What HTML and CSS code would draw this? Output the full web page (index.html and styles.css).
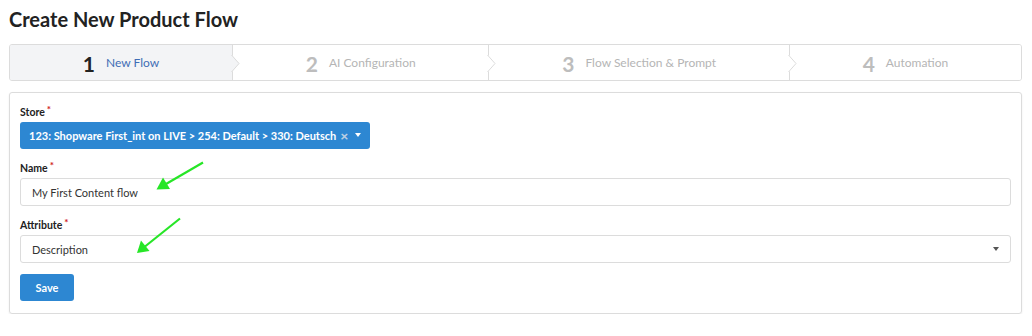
FILE: index.html
```html
<!DOCTYPE html>
<html lang="en">

<head>
    <meta charset="UTF-8">
    <meta name="viewport" content="width=device-width, initial-scale=1.0">
    <title>Create New Product Flow</title>
    <link rel="stylesheet" href="styles.css">
</head>

<body>
    <h1 class="page-title">Create New Product Flow</h1>

    <!-- wizard steps -->
    <div class="steps">
        <div class="step active">
            <span class="num">1</span><span class="text">New Flow</span>
            <svg class="chevron" width="10" height="17" viewBox="0 0 10 17">
                <polygon points="0,0 1,0 8.5,8.5 1,17 0,17" fill="#f3f4f6" />
                <polyline points="0.5,0 8,8.5 0.5,17" fill="none" stroke="#dcdcdc" />
            </svg>
        </div>
        <div class="step">
            <span class="num">2</span><span class="text">AI Configuration</span>
            <svg class="chevron" width="10" height="17" viewBox="0 0 10 17">
                <polygon points="0,0 1,0 8.5,8.5 1,17 0,17" fill="#fff" />
                <polyline points="0.5,0 8,8.5 0.5,17" fill="none" stroke="#dcdcdc" />
            </svg>
        </div>
        <div class="step">
            <span class="num">3</span><span class="text">Flow Selection &amp; Prompt</span>
            <svg class="chevron" width="10" height="17" viewBox="0 0 10 17">
                <polygon points="0,0 1,0 8.5,8.5 1,17 0,17" fill="#fff" />
                <polyline points="0.5,0 8,8.5 0.5,17" fill="none" stroke="#dcdcdc" />
            </svg>
        </div>
        <div class="step">
            <span class="num">4</span><span class="text">Automation</span>
        </div>
    </div>

    <!-- form -->
    <div class="card">
        <div class="field">
            <label class="field-label">Store<span class="req">*</span></label>
            <div class="store-select">
                <span class="store-value">123: Shopware First_int on LIVE &gt; 254: Default &gt; 330: Deutsch</span>
                <span class="clear">&times;</span>
                <span class="caret white"></span>
            </div>
        </div>
        <div class="field">
            <label class="field-label">Name<span class="req">*</span></label>
            <div class="input">My First Content flow</div>
        </div>
        <div class="field">
            <label class="field-label">Attribute<span class="req">*</span></label>
            <div class="input select">
                <span>Description</span>
                <span class="caret"></span>
            </div>
        </div>
        <button class="btn-save">Save</button>
    </div>

    <!-- green annotation arrows -->
    <svg class="annotations" width="1032" height="336" viewBox="0 0 1032 336">
        <line x1="203" y1="162.5" x2="166" y2="184" stroke="#27e627" stroke-width="2.2" />
        <polygon points="156.5,189.5 163,177.5 170,189" fill="#27e627" />
        <line x1="180" y1="218.5" x2="145" y2="246.5" stroke="#27e627" stroke-width="2.2" />
        <polygon points="137,253 141,240.5 149.5,251" fill="#27e627" />
    </svg>
</body>

</html>
```

FILE: styles.css
```css
* {
    margin: 0;
    padding: 0;
    box-sizing: border-box;
}

body {
    font-family: Lato, "Open Sans", sans-serif;
    color: #222;
    padding: 7px 10px 0 9px;
    background: #fff;
}

.page-title {
    font-size: 20px;
    line-height: 24px;
    font-weight: 700;
    color: #222;
}

/* wizard */
.steps {
    display: flex;
    margin-top: 13px;
    height: 37px;
    border: 1px solid #dcdcdc;
    border-radius: 3px;
    overflow: hidden;
}

.step {
    flex: 1 1 auto;
    position: relative;
    display: flex;
    justify-content: center;
    align-items: center;
    border-right: 1px solid #dcdcdc;
    background: #fff;
}

.step:last-child {
    border-right: 0;
}

.step.active {
    background: #f3f4f6;
}

.step .num {
    font-size: 21px;
    font-weight: 700;
    color: #bdbdbd;
    line-height: 20px;
    margin-top: 3px;
}

.step .text {
    font-size: 12px;
    color: #b5b5b5;
    margin-left: 11px;
}

.step.active .num {
    color: #222;
}

.step.active .text {
    color: #3f6db5;
}

.step .chevron {
    position: absolute;
    left: calc(100% - 1px);
    top: 10px;
    z-index: 1;
}

/* form card */
.card {
    margin-top: 11px;
    border: 1px solid #dcdcdc;
    border-radius: 3px;
    box-shadow: 0 1px 2px rgba(0, 0, 0, 0.08);
    padding: 13px 10px 12px 10px;
}

.field {
    margin-bottom: 13px;
}

.field:nth-child(3) {
    margin-bottom: 11px;
}

.field-label {
    display: block;
    font-size: 10.5px;
    line-height: 13px;
    font-weight: 700;
    color: #222;
    margin-bottom: 3px;
}

.req {
    color: #d01919;
    font-size: 10px;
    position: relative;
    top: -3px;
    margin-left: 2px;
}

.store-select {
    display: inline-flex;
    align-items: center;
    height: 27px;
    padding: 0 9px 0 9px;
    background: #2d87d2;
    border-radius: 3px;
    color: #fff;
}

.store-value {
    font-size: 11px;
    font-weight: 700;
}

.clear {
    color: #b9cee3;
    font-size: 14px;
    font-weight: 900;
    margin-left: 4px;
    line-height: 1;
}

.caret {
    width: 0;
    height: 0;
    border-left: 3.5px solid transparent;
    border-right: 3.5px solid transparent;
    border-top: 4px solid #555;
}

.caret.white {
    border-top-color: #fff;
    margin-left: 7px;
    margin-top: -2px;
}

.input {
    display: flex;
    align-items: center;
    height: 28px;
    border: 1px solid #dcdcdc;
    border-radius: 3px;
    padding: 0 11px;
    font-size: 11px;
    color: #333;
}

.input.select {
    justify-content: space-between;
}

.btn-save {
    display: block;
    width: 54px;
    height: 27px;
    border: 0;
    border-radius: 3px;
    background: #2d87d2;
    color: #fff;
    font-family: inherit;
    font-size: 11px;
    font-weight: 700;
}

/* annotation arrows */
.annotations {
    position: absolute;
    left: 0;
    top: 0;
    pointer-events: none;
}
```
